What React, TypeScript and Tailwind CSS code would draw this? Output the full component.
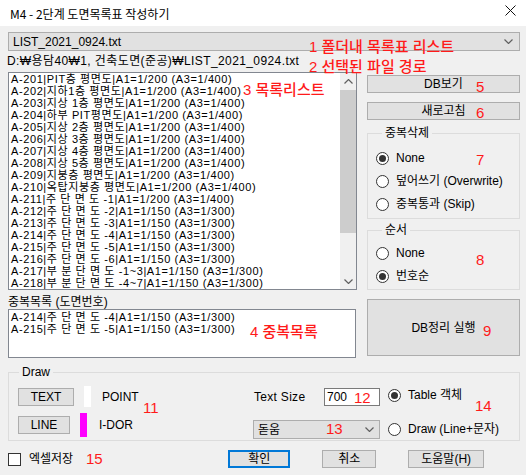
import React from "react"

const rows = [
  "A-201|PIT층 평면도|A1=1/200 (A3=1/400)",
  "A-202|지하1층 평면도|A1=1/200 (A3=1/400)",
  "A-203|지상 1층 평면도|A1=1/200 (A3=1/400)",
  "A-204|하부 PIT평면도|A1=1/200 (A3=1/400)",
  "A-205|지상 2층 평면도|A1=1/200 (A3=1/400)",
  "A-206|지상 3층 평면도|A1=1/200 (A3=1/400)",
  "A-207|지상 4층 평면도|A1=1/200 (A3=1/400)",
  "A-208|지상 5층 평면도|A1=1/200 (A3=1/400)",
  "A-209|지붕층 평면도|A1=1/200 (A3=1/400)",
  "A-210|옥탑지붕층 평면도|A1=1/200 (A3=1/400)",
  "A-211|주 단 면 도 -1|A1=1/200 (A3=1/400)",
  "A-212|주 단 면 도 -2|A1=1/150 (A3=1/300)",
  "A-213|주 단 면 도 -3|A1=1/150 (A3=1/300)",
  "A-214|주 단 면 도 -4|A1=1/150 (A3=1/300)",
  "A-215|주 단 면 도 -5|A1=1/150 (A3=1/300)",
  "A-216|주 단 면 도 -6|A1=1/150 (A3=1/300)",
  "A-217|부 분 단 면 도 -1~3|A1=1/150 (A3=1/300)",
  "A-218|부 분 단 면 도 -4~7|A1=1/150 (A3=1/300)",
]

const dupes = ["A-214|주 단 면 도 -4|A1=1/150 (A3=1/300)", "A-215|주 단 면 도 -5|A1=1/150 (A3=1/300)"]

function Chevron({ up = false }: { up?: boolean }) {
  return (
    <svg width="9" height="5" viewBox="0 0 9 5" className={up ? "rotate-180" : ""}>
      <polyline points="0.5,0.5 4.5,4.5 8.5,0.5" fill="none" stroke="#606060" strokeWidth="1.2" />
    </svg>
  )
}

function Btn({ className = "", children }: { className?: string; children: React.ReactNode }) {
  return (
    <div className={`flex items-center justify-center bg-[#e1e1e1] border border-[#adadad] text-[12px] leading-[12px] ${className}`}>
      {children}
    </div>
  )
}

function Radio({ checked = false, label }: { checked?: boolean; label: string }) {
  return (
    <div className="flex items-center h-[14px]">
      <span className="w-[13px] h-[13px] rounded-full border border-[#333] bg-white flex items-center justify-center">
        {checked && <span className="w-[7px] h-[7px] rounded-full bg-[#333]" />}
      </span>
      <span className="ml-[7px] text-[12px] leading-[12px]">{label}</span>
    </div>
  )
}

function Note({ className, children }: { className: string; children: React.ReactNode }) {
  return (
    <span className={`absolute text-[#ff1a1a] text-[15px] leading-[16px] font-medium whitespace-nowrap ${className}`}>
      {children}
    </span>
  )
}

export default function App() {
  return (
    <div className="relative w-[526px] h-[475px] bg-[#f0f0f0] text-black font-['Liberation_Sans','Noto_Sans_CJK_KR',sans-serif] overflow-hidden">
      {/* title bar */}
      <div className="h-[26px] bg-white flex items-center justify-between pl-[10px] pr-[10px]">
        <span className="text-[12px] leading-[12px] mt-[1px] font-['Noto_Sans_CJK_KR',sans-serif]">M4 - 2단계 도면목록표 작성하기</span>
        <svg width="11" height="11" viewBox="0 0 11 11" className="mb-[5px]">
          <path d="M0.5 0.5 L10.5 10.5 M10.5 0.5 L0.5 10.5" stroke="#111" strokeWidth="1" />
        </svg>
      </div>

      {/* file combo */}
      <div className="mt-[6px] ml-[8px] w-[512px] h-[19px] bg-[#e1e1e1] border border-[#adadad] flex items-center justify-between pl-[4px] pr-[6px]">
        <span className="text-[12px] leading-[12px]">LIST_2021_0924.txt</span>
        <Chevron />
      </div>

      <div className="ml-[7px] h-[20px] flex items-center text-[12px] leading-[12px] tracking-[0.4px]">D:₩용담40₩1, 건축도면(준공)₩LIST_2021_0924.txt</div>

      {/* main */}
      <div className="mt-[1px] flex">
        <div className="ml-[8px] w-[349px] flex flex-col">
          <div className="h-[218px] border border-[#828790] bg-white flex">
            <div className="flex-1 pl-[2px] text-[11px] leading-[12px] tracking-[0.6px] overflow-hidden">
              {rows.map((r) => (
                <div key={r} className="h-[12px] whitespace-nowrap">{r}</div>
              ))}
            </div>
            <div className="w-[16px] bg-[#f0f0f0] flex flex-col items-center">
              <div className="h-[17px] flex items-center justify-center">
                <Chevron up />
              </div>
              <div className="w-[16px] h-[143px] bg-[#cdcdcd]" />
              <div className="flex-1" />
              <div className="h-[16px] flex items-center justify-center">
                <Chevron />
              </div>
            </div>
          </div>
          <div className="h-[19px] pt-[6px] text-[12px] leading-[12px]">중복목록 (도면번호)</div>
          <div className="w-[348px] h-[49px] border border-[#828790] bg-white pl-[2px] pt-[1px] text-[11px] leading-[12px] tracking-[0.6px]">
            {dupes.map((r) => (
              <div key={r} className="h-[12px] whitespace-nowrap">{r}</div>
            ))}
          </div>
        </div>

        <div className="ml-[10px] w-[153px] flex flex-col">
          <Btn className="mt-[3px] h-[18px]">DB보기</Btn>
          <Btn className="mt-[9px] h-[18px]">새로고침</Btn>
          <fieldset className="mt-[6px] h-[93px] border border-[#dcdcdc] pl-[8px]">
            <legend className="ml-[6px] px-[3px] text-[12px] leading-[14px]">중복삭제</legend>
            <div className="mt-[11px] flex flex-col gap-[9px]">
              <Radio checked label="None" />
              <Radio label="덮어쓰기 (Overwrite)" />
              <Radio label="중복통과 (Skip)" />
            </div>
          </fieldset>
          <fieldset className="mt-[4px] h-[67px] border border-[#dcdcdc] pl-[8px]">
            <legend className="ml-[6px] px-[3px] text-[12px] leading-[14px]">순서</legend>
            <div className="mt-[9px] flex flex-col gap-[9px]">
              <Radio label="None" />
              <Radio checked label="번호순" />
            </div>
          </fieldset>
          <Btn className="mt-[9px] h-[57px]">DB정리 실행</Btn>
        </div>
      </div>

      {/* draw group */}
      <fieldset className="mt-[7px] ml-[8px] w-[512px] h-[76px] border border-[#dcdcdc]">
        <legend className="ml-[10px] px-[3px] text-[12px] leading-[14px]">Draw</legend>
        <div className="flex">
          <div className="ml-[9px] w-[235px] mt-[7px] flex flex-col gap-[6px]">
            <div className="h-[21px] flex items-center">
              <Btn className="w-[56px] h-[18px]">TEXT</Btn>
              <span className="ml-[10px] w-[7px] h-[21px] bg-white" />
              <span className="ml-[11px] text-[12px] leading-[12px]">POINT</span>
            </div>
            <div className="h-[24px] flex items-center">
              <Btn className="w-[52px] h-[18px]">LINE</Btn>
              <span className="ml-[10px] w-[7px] h-[24px] bg-[#ff00ff]" />
              <span className="ml-[12px] text-[12px] leading-[12px]">I-DOR</span>
            </div>
          </div>
          <div className="w-[127px] mt-[7px] flex flex-col">
            <div className="h-[21px] flex items-center justify-between">
              <span className="ml-[1px] text-[12px] leading-[12px] tracking-[0.3px]">Text Size</span>
              <div className="w-[56px] h-[18px] border border-[#7a7a7a] bg-white pl-[2px] flex items-center text-[12px] leading-[12px]">700</div>
            </div>
            <div className="mt-[13px] h-[19px] bg-[#e1e1e1] border border-[#adadad] flex items-center justify-between pl-[4px] pr-[5px]">
              <span className="text-[12px] leading-[12px]">돋움</span>
              <Chevron />
            </div>
          </div>
          <div className="ml-[8px] mt-[9px] flex flex-col gap-[20px]">
            <Radio checked label="Table 객체" />
            <Radio label="Draw (Line+문자)" />
          </div>
        </div>
      </fieldset>

      {/* bottom */}
      <div className="mt-[9px] h-[18px] flex items-center">
        <span className="ml-[8px] w-[13px] h-[13px] border border-[#333] bg-white" />
        <span className="ml-[8px] text-[12px] leading-[12px]">엑셀저장</span>
        <Btn className="ml-[155px] w-[62px] h-[18px] !border-2 !border-[#0078d7]">확인</Btn>
        <Btn className="ml-[32px] w-[54px] h-[18px]">취소</Btn>
        <Btn className="ml-[32px] w-[76px] h-[18px]">도움말(H)</Btn>
      </div>

      <Note className="left-[309px] top-[39px]">1 폴더내 목록표 리스트</Note>
      <Note className="left-[309px] top-[59px]">2 선택된 파일 경로</Note>
      <Note className="left-[243px] top-[82px]">3 목록리스트</Note>
      <Note className="left-[250px] top-[324px]">4 중복목록</Note>
      <Note className="left-[476px] top-[79px]">5</Note>
      <Note className="left-[476px] top-[105px]">6</Note>
      <Note className="left-[476px] top-[152px]">7</Note>
      <Note className="left-[476px] top-[252px]">8</Note>
      <Note className="left-[483px] top-[323px]">9</Note>
      <Note className="left-[143px] top-[400px]">11</Note>
      <Note className="left-[354px] top-[390px]">12</Note>
      <Note className="left-[326px] top-[421px]">13</Note>
      <Note className="left-[475px] top-[398px]">14</Note>
      <Note className="left-[86px] top-[451px]">15</Note>
    </div>
  )
}
